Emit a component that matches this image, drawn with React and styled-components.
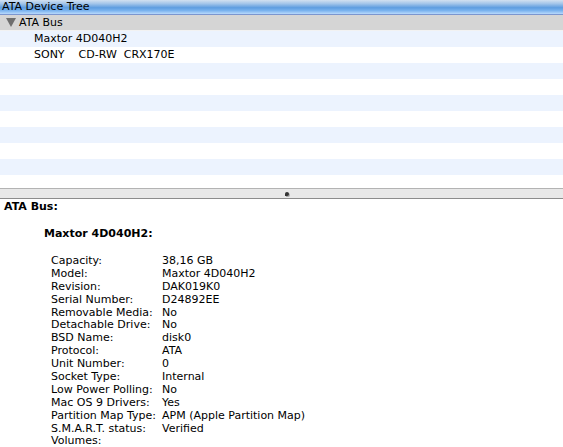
import styled, { createGlobalStyle } from 'styled-components'

const GlobalStyle = createGlobalStyle`
    html, body {
        margin: 0;
        padding: 0;
        background: #fff;
        overflow: hidden;
    }
    body {
        font-family: "DejaVu Sans", "Liberation Sans", sans-serif;
        font-size: 11px;
        color: #000;
    }
`

const treeRows = [
    { name: 'Maxtor 4D040H2' },
    { name: 'SONY    CD-RW  CRX170E' },
    {}, {}, {}, {}, {}, {}, {}, {},
]

const details = [
    ['Capacity:', '38,16 GB'],
    ['Model:', 'Maxtor 4D040H2'],
    ['Revision:', 'DAK019K0'],
    ['Serial Number:', 'D24892EE'],
    ['Removable Media:', 'No'],
    ['Detachable Drive:', 'No'],
    ['BSD Name:', 'disk0'],
    ['Protocol:', 'ATA'],
    ['Unit Number:', '0'],
    ['Socket Type:', 'Internal'],
    ['Low Power Polling:', 'No'],
    ['Mac OS 9 Drivers:', 'Yes'],
    ['Partition Map Type:', 'APM (Apple Partition Map)'],
    ['S.M.A.R.T. status:', 'Verified'],
    ['Volumes:', ''],
]

const App = () => {
    return (
        <Window>
            <GlobalStyle />
            <TreePane>
                <Header>ATA Device Tree</Header>
                <GroupRow>
                    <Triangle />
                    ATA Bus
                </GroupRow>
                {treeRows.map((row, i) => (
                    <Row key={i} $odd={i % 2 === 0}>{row.name}</Row>
                ))}
            </TreePane>
            <Splitter>
                <Dimple />
            </Splitter>
            <Details>
                <Title>ATA Bus:</Title>
                <SubTitle>Maxtor 4D040H2:</SubTitle>
                <Table>
                    {details.map(([k, v]) => (
                        <Pair key={k}>
                            <span>{k}</span>
                            <span>{v}</span>
                        </Pair>
                    ))}
                </Table>
            </Details>
        </Window>
    )
}

const Window = styled.div`
    width: 563px;
    height: 447px;
    overflow: hidden;
    display: flex;
    flex-direction: column;
`
const TreePane = styled.div`
    height: 188px;
    overflow: hidden;
    display: flex;
    flex-direction: column;
    flex-shrink: 0;
`
const Header = styled.div`
    height: 14px;
    line-height: 14px;
    padding-left: 2px;
    border-bottom: 1px solid #7b96cf;
    background: linear-gradient(to bottom, #d2e0f0 0%, #a5c6ea 25%, #5e9de0 55%, #79b2ee 75%, #b8d9fc 100%);
    flex-shrink: 0;
`
const GroupRow = styled.div`
    height: 15px;
    line-height: 15px;
    background: #d5d5d5;
    border-bottom: 1px solid #f2f2f2;
    display: flex;
    align-items: center;
    padding-left: 6px;
    gap: 1px;
    flex-shrink: 0;
`
const Triangle = styled.span`
    width: 0;
    height: 0;
    border-left: 5px solid transparent;
    border-right: 5px solid transparent;
    border-top: 9px solid #6e6e6e;
    margin-right: 2px;
`
const Row = styled.div`
    height: 16px;
    line-height: 16px;
    padding-left: 34px;
    white-space: pre;
    flex-shrink: 0;
    background: ${p => (p.$odd ? '#ecf3fe' : '#ffffff')};
`
const Splitter = styled.div`
    height: 9px;
    border-top: 1px solid #b3b3b3;
    border-bottom: 1px solid #8c8c8c;
    background: #e8e8e8;
    display: flex;
    justify-content: center;
    align-items: center;
    flex-shrink: 0;
`
const Dimple = styled.span`
    width: 4px;
    height: 4px;
    border-radius: 50% 50% 50% 0;
    background: #333;
    box-shadow: 1px 1px 0 #aaa;
    margin-left: 11px;
`
const Details = styled.div`
    padding: 1px 0 0 4px;
`
const Title = styled.div`
    font-weight: bold;
    height: 14px;
    line-height: 14px;
`
const SubTitle = styled.div`
    font-weight: bold;
    margin: 13px 0 15px 40px;
    line-height: 13px;
`
const Table = styled.div`
    margin-left: 47px;
    display: flex;
    flex-direction: column;
`
const Pair = styled.div`
    display: grid;
    grid-template-columns: 111px 1fr;
    line-height: 12.9px;
    height: 12.9px;
    white-space: nowrap;
`

export default App
